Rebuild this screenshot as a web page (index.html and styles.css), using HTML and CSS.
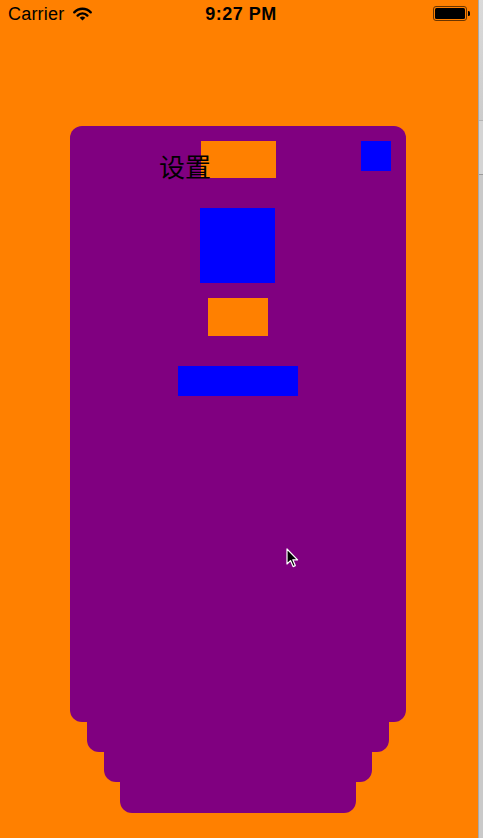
FILE: index.html
```html
<!DOCTYPE html>
<html>
<head>
<meta charset="utf-8">
<link rel="stylesheet" href="styles.css">
</head>
<body>
<div class="screen">
  <div class="statusbar">
    <div class="sb-left">
      <span class="carrier">Carrier</span>
      <svg class="wifi" width="19" height="14" viewBox="0 0 19 14">
        <path d="M1.3 5.3 A11.3 11.3 0 0 1 17.7 5.3" fill="none" stroke="#000" stroke-width="2.4" stroke-linecap="round"/>
        <path d="M4.6 8.6 A6.6 6.6 0 0 1 14.4 8.6" fill="none" stroke="#000" stroke-width="2.4" stroke-linecap="round"/>
        <path d="M9.5 13.6 L6.7 10.8 A4 4 0 0 1 12.3 10.8 Z" fill="#000"/>
      </svg>
    </div>
    <div class="time">9:27 PM</div>
    <div class="sb-right">
      <div class="battery"><div class="battery-fill"></div></div>
      <div class="battery-nub"></div>
    </div>
  </div>

  <div class="stack">
    <div class="card">
      <div class="box orange-1"></div>
      <div class="box blue-square"></div>
      <div class="box orange-2"></div>
      <div class="box blue-bar"></div>
      <div class="title">设置</div>
      <div class="badge"></div>
    </div>
    <div class="layer layer-2"></div>
    <div class="layer layer-3"></div>
    <div class="layer layer-4"></div>
  </div>

  <svg class="cursor" width="13" height="20" viewBox="0 0 13 20">
    <path d="M1 1 L1 16 L4.5 12.6 L7.1 18.6 L9.3 17.6 L6.8 11.8 L11.6 11.8 Z" fill="#000" stroke="#fff" stroke-width="1.2" stroke-linejoin="round"/>
  </svg>
</div>
<div class="strip">
  <div class="strip-top"></div>
  <div class="strip-mid"></div>
  <div class="strip-bottom"></div>
</div>
</body>
</html>
```

FILE: styles.css
```css
html, body {
  margin: 0;
  padding: 0;
}

body {
  display: flex;
  width: 483px;
  height: 838px;
  overflow: hidden;
  background: #ff8000;
  font-family: "Liberation Sans", Arial, sans-serif;
}

.screen {
  position: relative;
  width: 478px;
  height: 838px;
  background: #ff8000;
  display: flex;
  flex-direction: column;
}

.statusbar {
  height: 30px;
  box-sizing: border-box;
  padding: 4px 8px 0 8px;
  display: grid;
  grid-template-columns: 1fr auto 1fr;
  align-items: start;
  color: #000;
}

.sb-left {
  display: flex;
  align-items: center;
  gap: 9px;
  height: 20px;
}

.carrier {
  font-size: 18px;
  line-height: 20px;
  letter-spacing: 0.2px;
}

.wifi {
  display: block;
}

.time {
  font-size: 18px;
  line-height: 20px;
  font-weight: 700;
  letter-spacing: 0.5px;
  padding-left: 4px;
}

.sb-right {
  display: flex;
  justify-content: flex-end;
  align-items: center;
  height: 20px;
}

.battery {
  width: 34px;
  height: 15px;
  box-sizing: border-box;
  border: 1px solid #6a3500;
  border-radius: 3px;
  padding: 1px;
  margin-top: -2px;
}

.battery-fill {
  width: 100%;
  height: 100%;
  background: #000;
  border-radius: 1.5px;
}

.battery-nub {
  width: 2px;
  height: 5px;
  background: #000;
  border-radius: 0 1.5px 1.5px 0;
  margin-left: 1px;
  margin-top: -2px;
}

.stack {
  margin-top: 96px;
  margin-left: 70px;
  width: 336px;
  display: flex;
  flex-direction: column;
  align-items: center;
}

.card {
  position: relative;
  width: 336px;
  height: 596px;
  box-sizing: border-box;
  padding-top: 15px;
  background: #800080;
  border-radius: 12px;
  display: flex;
  flex-direction: column;
  align-items: center;
}

.box {
  flex: none;
}

.orange-1 {
  width: 75px;
  height: 37px;
  background: #ff8000;
  margin-left: 1px;
}

.blue-square {
  width: 75px;
  height: 75px;
  background: #0000ff;
  margin-top: 30px;
  margin-right: 1px;
}

.orange-2 {
  width: 60px;
  height: 38px;
  background: #ff8000;
  margin-top: 15px;
}

.blue-bar {
  width: 120px;
  height: 30px;
  background: #0000ff;
  margin-top: 30px;
}

.title {
  position: absolute;
  left: 89px;
  top: 25px;
  font-family: "Noto Sans CJK SC", "Noto Sans", sans-serif;
  font-size: 26px;
  line-height: 30px;
  color: #000;
}

.badge {
  position: absolute;
  top: 15px;
  right: 15px;
  width: 30px;
  height: 30px;
  background: #0000ff;
}

.layer {
  height: 30px;
  background: #800080;
  border-radius: 0 0 12px 12px;
}

.layer-2 {
  width: 302px;
}

.layer-3 {
  width: 268px;
}

.layer-4 {
  width: 236px;
  height: 31px;
}

.cursor {
  position: absolute;
  left: 286px;
  top: 548px;
}

.strip {
  flex: 1;
  display: flex;
  flex-direction: column;
  background: #c9c9c9;
  border-left: 1px solid #a8a8a8;
}

.strip-top {
  height: 120px;
  background: linear-gradient(#dadada, #cccccc);
  border-bottom: 1px solid #b4b4b4;
}

.strip-mid {
  height: 53px;
  background: #d4d4d4;
  border-bottom: 1px solid #9a9a9a;
}

.strip-bottom {
  flex: 1;
  background: #c9c9c9;
}
```
